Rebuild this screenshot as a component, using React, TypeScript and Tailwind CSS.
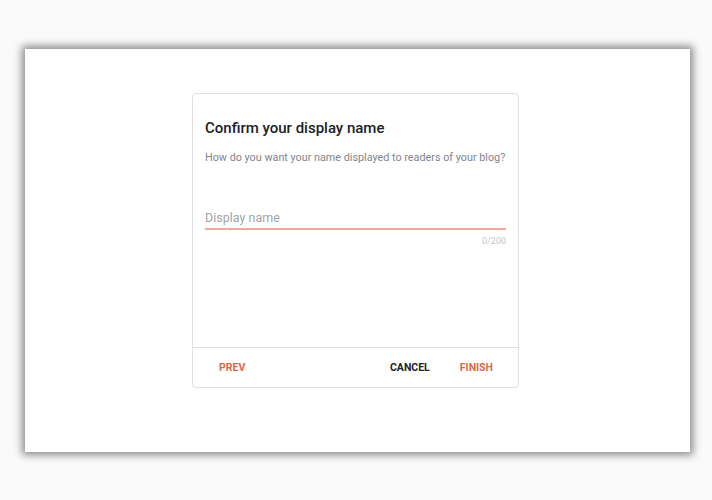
const accent = "text-[#d9694a]";

const FooterButton = ({ label, primary }: { label: string; primary?: boolean }) => {
  return (
    <button
      className={
        "text-[10.5px] font-bold leading-[14px] " +
        (primary ? accent : "text-[#202124]")
      }
    >
      {label}
    </button>
  );
};

const App = () => {
  return (
    <div className="h-[500px] w-[712px] bg-[#fafafa] pt-[49px] pl-[25px] font-['Roboto',_'Noto_Sans',_sans-serif]">
      <div className="h-[403px] w-[665px] bg-white pt-[44px] pl-[167px] shadow-[0_0_8px_3px_rgba(0,0,0,0.45)]">
        <div className="flex h-[295px] w-[327px] flex-col rounded-[4px] border border-[#e0e0e0] bg-white">
          <div className="flex-1 px-[12px] pt-[24px]">
            <div className="text-[15px] font-medium leading-[20px] text-[#202124]">
              Confirm your display name
            </div>
            <div className="mt-[12px] text-[10.8px] leading-[16px] text-[#80868b]">
              How do you want your name displayed to readers of your blog?
            </div>
            <div className="mt-[43px] border-b-2 border-[#eeab96] pb-[1px] text-[12.5px] leading-[18px] text-[#a0a4a8]">
              Display name
            </div>
            <div className="mt-[5px] text-right text-[9px] leading-[12px] text-[#c4c7ca]">0/200</div>
          </div>
          <div className="flex h-[40px] items-center border-t border-[#e0e0e0] pr-[25px] pl-[26px]">
            <FooterButton label="PREV" primary />
            <div className="flex-1" />
            <FooterButton label="CANCEL" />
            <div className="w-[30px]" />
            <FooterButton label="FINISH" primary />
          </div>
        </div>
      </div>
    </div>
  );
};

export default App;
